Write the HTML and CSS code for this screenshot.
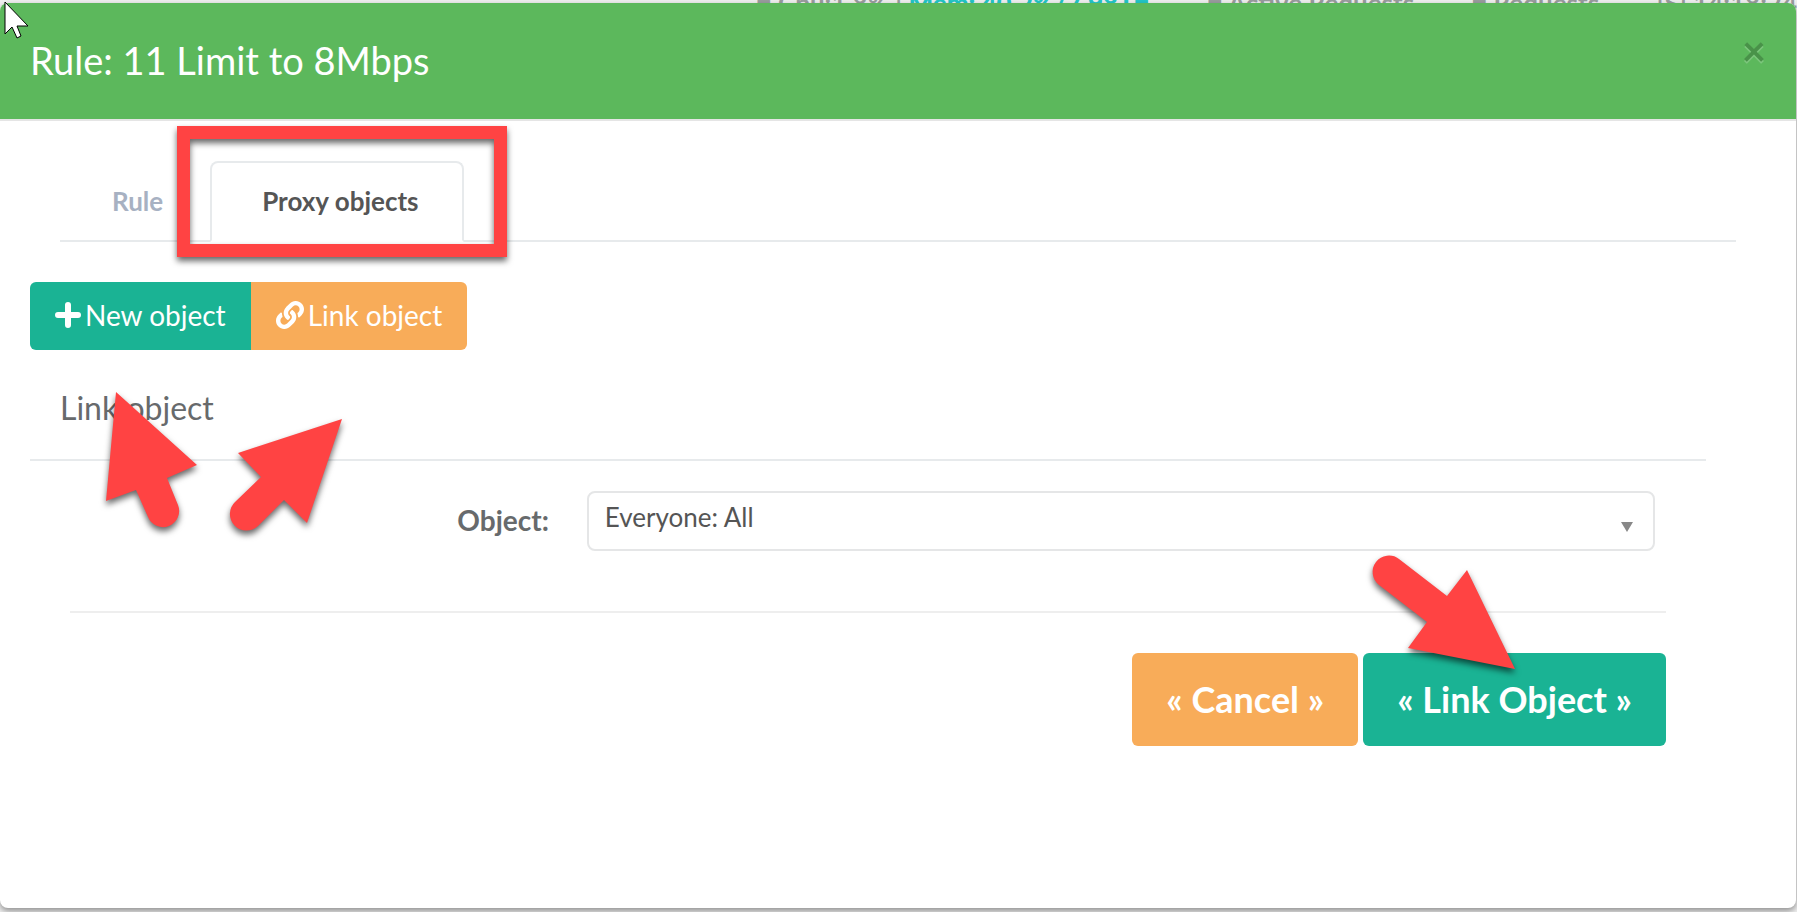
FILE: index.html
```
<!DOCTYPE html>
<html lang="en">
<head>
  <meta charset="UTF-8" />
  <meta name="viewport" content="width=device-width, initial-scale=1.0" />
  <title>Rule: 11 Limit to 8Mbps</title>
  <link rel="stylesheet" href="styles.css">
</head>
<body>
  <!-- Status bar, mostly hidden behind the modal -->
  <div class="statusbar">
    <span>■ Cpu:1.8% | <b>Mem: 40.2%/7.98T■</b></span>
    <span>■ Active Requests</span>
    <span>■ Requests</span>
    <span>[S] 14:18:24</span>
  </div>

  <div class="modal">
    <header class="modal-header">
      <h1 class="modal-title">Rule: 11 Limit to 8Mbps</h1>
      <button class="close" type="button" aria-label="Close">×</button>
    </header>

    <main class="modal-body">
      <nav class="tabs">
        <a class="tab" href="#rule">Rule</a>
        <a class="tab active" href="#proxy-objects">Proxy objects</a>
      </nav>

      <div class="btn-group">
        <button class="btn btn-primary" type="button">
          <svg class="icon-plus" viewBox="0 0 26 26" aria-hidden="true">
            <path d="M13 3v20M3 13h20" />
          </svg>
          New object
        </button>
        <button class="btn btn-warning" type="button">
          <svg class="icon-link" viewBox="0 0 512 512" aria-hidden="true">
            <path d="M326.6 185.4c59.7 59.8 58.9 155.7.4 214.6-.1.1-.2.3-.4.4l-67.200 67.200c-59.300 59.300-155.700 59.300-215 0-59.300-59.300-59.300-155.700 0-215l37.100-37.100c9.800-9.800 26.800-3.300 27.300 10.600.6 17.700 3.800 35.500 9.700 52.700 2 5.800.6 12.200-3.800 16.600l-13.100 13.100c-28 28-28.900 73.700-1.200 102 28 28.600 74.100 28.700 102.300.5l67.200-67.200c28.200-28.200 28.100-73.800 0-101.800-3.700-3.700-7.400-6.600-10.300-8.600a16 16 0 0 1-6.900-12.600c-.4-10.600 3.300-21.500 11.700-29.800l21.100-21.100c5.500-5.500 14.200-6.200 20.600-1.700a152.500 152.500 0 0 1 20.500 17.200zM467.500 44.400c-59.300-59.300-155.700-59.300-215 0l-67.200 67.200c-.1.100-.3.300-.4.400-58.600 58.900-59.400 154.800.4 214.600a152.500 152.500 0 0 0 20.500 17.200c6.400 4.500 15.100 3.800 20.600-1.700l21.100-21.100c8.400-8.400 12.100-19.200 11.700-29.800a16 16 0 0 0-6.900-12.600c-2.900-2-6.600-4.900-10.300-8.600-28.100-28.100-28.200-73.600 0-101.800l67.200-67.200c28.200-28.200 74.300-28.100 102.300.5 27.800 28.300 26.800 73.900-1.200 102l-13.100 13.100c-4.400 4.400-5.800 10.800-3.800 16.600 5.900 17.200 9 35 9.700 52.700.5 13.900 17.500 20.400 27.300 10.600l37.100-37.100c59.300-59.300 59.300-155.700 0-215z" />
          </svg>
          Link object
        </button>
      </div>

      <form class="link-form">
        <h2 class="form-title">Link object</h2>
        <div class="form-row">
          <label class="form-label" for="object">Object:</label>
          <div class="select-wrap">
            <select id="object" class="form-select">
              <option>Everyone: All</option>
            </select>
          </div>
        </div>
        <div class="form-actions">
          <button class="btn-lg btn-warning" type="button">« Cancel »</button>
          <button class="btn-lg btn-primary" type="button">« Link Object »</button>
        </div>
      </form>
    </main>
  </div>

  <!-- Annotations over the page -->
  <div class="highlight"></div>
  <svg class="arrows" width="1797" height="912" aria-hidden="true">
    <path d="M116 392L197 465L167 478L178 505A16 16 0 0 1 148 517L136 490L106 501Z" />
    <path d="M342 419L307 523L284 500L258 526A16 16 0 0 1 235 502L261 477L238 453Z" />
    <path d="M1515 669L1408 648L1427 622L1379 585A16 16 0 0 1 1399 559L1447 596L1467 570Z" />
  </svg>
  <svg class="cursor" width="26" height="40" viewBox="0 0 26 40" aria-hidden="true">
    <path d="M1 1V33L8 26L13 37L17 35L13 25H24Z" />
  </svg>
</body>
</html>
```
FILE: styles.css
```
* {
  margin: 0;
  padding: 0;
  box-sizing: border-box;
}

body {
  font-family: Lato, sans-serif;
  background-color: #efefef;
  color: #676a6c;
  min-height: 100vh;
  padding: 3px 1px 4px 0;
  display: flex;
  flex-direction: column;
  overflow: hidden;
}

button {
  font-family: inherit;
  cursor: pointer;
}

/* Status bar */
.statusbar {
  position: absolute;
  top: -10px;
  left: 756px;
  right: 0;
  display: flex;
  justify-content: space-between;
  font-size: 26px;
  line-height: 26px;
  font-weight: bold;
  color: #999c9e;
  white-space: nowrap;
}

.statusbar b {
  color: #23c6c8;
}

/* Modal */
.modal {
  position: relative;
  flex: 1;
  background-color: #fff;
  border-radius: 8px;
  box-shadow: 0 3px 6px rgba(0, 0, 0, 0.4);
}

.modal-header {
  display: flex;
  justify-content: space-between;
  align-items: flex-start;
  height: 118px;
  padding: 31px 30px 0 30px;
  background-color: #5cb85c;
  border-bottom: 2px solid #e5e5e5;
  border-radius: 8px 8px 0 0;
}

.modal-title {
  font-size: 38px;
  line-height: 52px;
  font-weight: 400;
  color: #fff;
}

.close {
  border: none;
  background: none;
  font-size: 42px;
  line-height: 32px;
  font-weight: bold;
  color: #000;
  text-shadow: 0 2px 0 #fff;
  opacity: 0.2;
}

.modal-body {
  padding: 40px 60px 40px 30px;
}

/* Tabs */
.tabs {
  display: flex;
  gap: 2px;
  margin: 0 0 40px 30px;
  border-bottom: 2px solid #e7eaec;
}

.tab {
  padding: 20px 43px 21px 50px;
  margin-bottom: -2px;
  border: 2px solid transparent;
  font-size: 26px;
  line-height: 36px;
  font-weight: bold;
  color: #a7b1c2;
  text-decoration: none;
}

.tab.active {
  color: #555;
  background-color: #fff;
  border-color: #e7eaec;
  border-bottom-color: #fff;
  border-radius: 8px 8px 0 0;
}

/* Buttons */
.btn-group {
  display: flex;
}

.btn {
  display: flex;
  align-items: center;
  gap: 4px;
  height: 68px;
  padding: 0 25px 2px;
  border: none;
  font-size: 28px;
  color: #fff;
}

.btn:first-child {
  border-radius: 6px 0 0 6px;
}

.btn:last-child {
  border-radius: 0 6px 6px 0;
}

.btn-primary {
  background-color: #1ab394;
}

.btn-warning {
  background-color: #f8ac59;
}

.icon-plus {
  width: 26px;
  height: 26px;
  fill: none;
  stroke: #fff;
  stroke-width: 6;
  stroke-linecap: round;
}

.icon-link {
  width: 28px;
  height: 28px;
  fill: #fff;
}

/* Link form */
.link-form {
  margin-right: 30px;
}

.form-title {
  padding: 38px 30px 31px;
  border-bottom: 2px solid #e7eaec;
  font-size: 32px;
  line-height: 40px;
  font-weight: 400;
}

.form-row {
  display: grid;
  grid-template-columns: 15fr 31fr;
  align-items: center;
  padding: 30px 51px 60px 40px;
}

.form-label {
  padding: 0 38px 2px 0;
  font-size: 28px;
  font-weight: bold;
  text-align: right;
}

.select-wrap {
  position: relative;
}

.select-wrap::after {
  content: "";
  position: absolute;
  right: 22px;
  top: 31px;
  border: 6px solid transparent;
  border-top: 10px solid #888;
  border-bottom: none;
}

.form-select {
  appearance: none;
  display: block;
  width: 100%;
  height: 60px;
  padding: 0 16px 8px;
  border: 2px solid #e5e6e7;
  border-radius: 8px;
  background-color: #fff;
  font-family: inherit;
  font-size: 26px;
  color: #555;
}

.form-actions {
  display: flex;
  justify-content: flex-end;
  gap: 5px;
  margin: 0 40px;
  padding-top: 40px;
  border-top: 2px solid #eee;
}

.btn-lg {
  height: 93px;
  padding: 0 34px 2px;
  border: none;
  border-radius: 6px;
  font-size: 36px;
  font-weight: bold;
  color: #fff;
}

/* Annotations */
.highlight {
  position: absolute;
  left: 177px;
  top: 126px;
  width: 330px;
  height: 131px;
  border: 13px solid #ff4343;
  filter: drop-shadow(0 4px 3px rgba(0, 0, 0, 0.6));
}

.arrows {
  position: absolute;
  left: 0;
  top: 0;
  fill: #ff4343;
  filter: drop-shadow(0 4px 3px rgba(0, 0, 0, 0.6));
  pointer-events: none;
}

.cursor {
  position: absolute;
  left: 4px;
  top: 1px;
  fill: #fff;
  stroke: #000;
  stroke-width: 1;
}
```
